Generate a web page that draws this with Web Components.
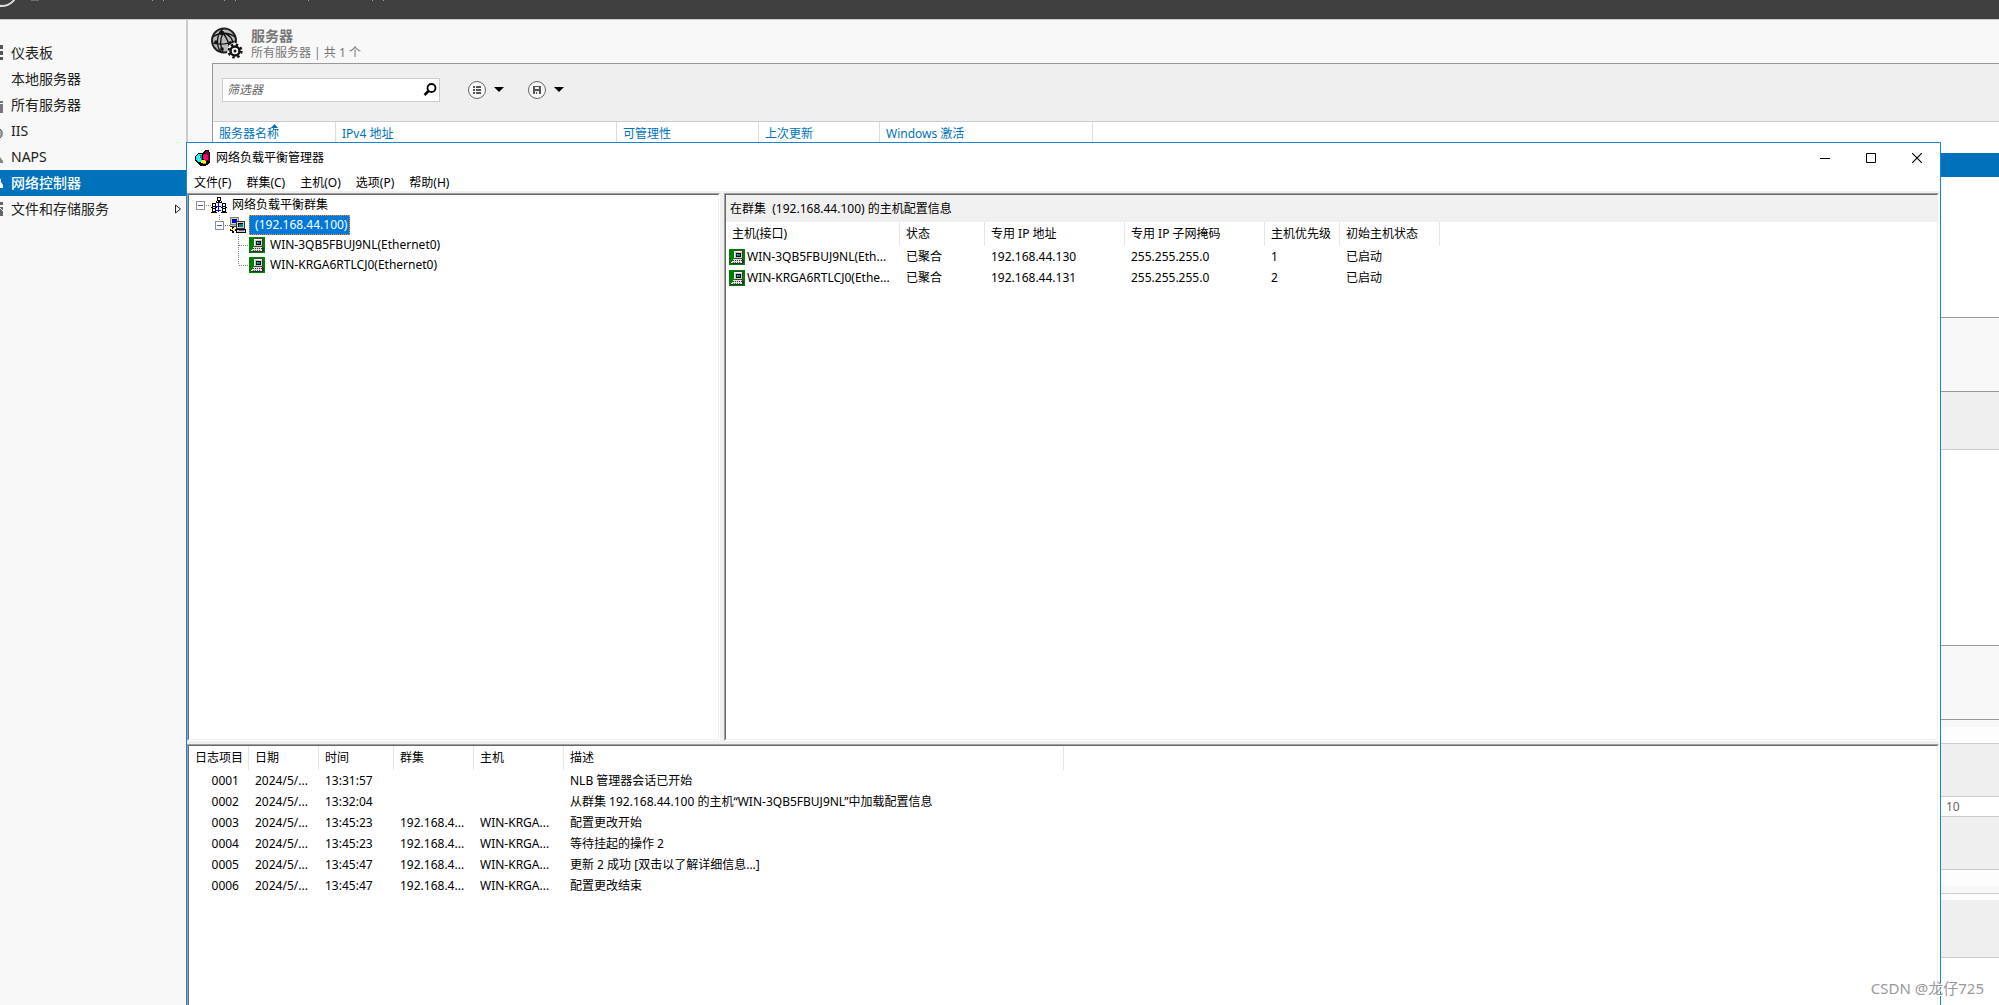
<!DOCTYPE html>
<html lang="zh-CN">
<head>
<meta charset="utf-8">
<title>网络负载平衡管理器</title>
<style>
html,body{margin:0;height:100%}
body{font:12px/16px "Noto Sans","Noto Sans CJK SC",sans-serif;color:#000;background:#f8f8f8;overflow:hidden}
</style>
</head>
<body>
<app-desktop></app-desktop>
<script>
const RESET = `*{box-sizing:border-box}button,input{font:inherit;color:inherit;margin:0;padding:0;border:0;background:none}svg{display:block;flex:none}a{color:inherit;text-decoration:none}`;
function define(name, css, html, setup) {
  customElements.define(name, class extends HTMLElement {
    connectedCallback() {
      if (this.shadowRoot) return;
      const root = this.attachShadow({ mode: 'open' });
      root.innerHTML = `<style>${RESET}${css}</style>${typeof html === 'function' ? html(this) : html}`;
      if (setup) setup(root, this);
    }
  });
}

const ICONS = {
  app: `<svg width="16" height="16" viewBox="0 0 16 16" shape-rendering="crispEdges"><path d="M3 3h5l1-2 2-1h3l1 3v9l-3 3-3 1H6l-3-2-2-2-1-3V7z" fill="#000"/><path d="M3 4h3l1 1v5l-2 2H3L1 10V7z" fill="#0ff"/><path d="M2 7h1v1H2zM4 6h1v1H4zM3 9h1v1H3z" fill="#fff"/><path d="M5 5h2v5H6z" fill="#088"/><path d="M9 3l2-2h2l1 2-2 1z" fill="#900048"/><path d="M8 5l2-1h2l1 2v3l-2 2-3-2z" fill="#f06"/><path d="M13 3h1v8h-1z" fill="#800040"/><path d="M5 12l3-2 3 1v2H7z" fill="#ff0"/><path d="M7 13h4l-1 1H8z" fill="#aa0"/></svg>`,
  world: `<svg width="16" height="16" viewBox="0 0 16 16" shape-rendering="crispEdges"><path d="M7 5h1v10H7zM5 9h5v1H5zM5 13h5v1H5z" fill="#00f"/><path d="M6 0h4v4H6zM5 4h6v2H5zM1 6h4v4H1zM0 10h6v1H0zM11 6h4v4h-4zM10 10h6v1h-6zM1 11h4v4H1zM0 15h6v1H0zM11 11h4v4h-4zM10 15h6v1h-6z" fill="#000"/><path d="M7 1h2v2H7zM6 4h1v1H6zM9 4h1v1H9zM2 7h2v2H2zM12 7h2v2h-2zM2 12h2v2H2zM12 12h2v2h-2zM2 10h2v1H2zM12 10h2v1h-2z" fill="#fff"/></svg>`,
  cluster: `<svg width="16" height="16" viewBox="0 0 16 16" shape-rendering="crispEdges"><path d="M0 0h9v8H0z" fill="#808080"/><path d="M1 1h7v6H1z" fill="#d0d0d0"/><path d="M2 2h5v4H2z" fill="#00f"/><path d="M2 2h5v1H2zM2 2h1v4H2z" fill="#000060"/><path d="M0 8h8v2H0z" fill="#c0c0c0"/><path d="M0 9h6v1H0z" fill="#444"/><path d="M6 4h9v8H6z" fill="#333"/><path d="M7 5h7v6H7z" fill="#d0d0d0"/><path d="M8 6h5v4H8z" fill="#000"/><path d="M9 7h4v3H9z" fill="#088"/><path d="M6 12h10v4H6z" fill="#000"/><path d="M7 13h8v2H7z" fill="#d0d0d0"/><path d="M9 13h5v1H9z" fill="#666"/><path d="M2 10h2v6H2zM0 12h6v2H0z" fill="#000"/><path d="M3 11h2v3H3zM1 12h3v1H1z" fill="#ff0"/></svg>`,
  host: `<svg width="16" height="16" viewBox="0 0 16 16" shape-rendering="crispEdges"><path d="M0 0h16v16H0z" fill="#008000"/><path d="M5 2h1V1h8v8h-1v1H5z" fill="#404040"/><path d="M5 2h8v7H5z" fill="#c8c8c8"/><path d="M5 2h8v1H5zM5 3h1v6H5z" fill="#fff"/><path d="M7 4h5v4H7z" fill="#000"/><path d="M8 5h3v2H8z" fill="#008c8c"/><path d="M8 5h1v1H8z" fill="#0ff"/><path d="M4 10h10v1h1v3h-1v1H2v-1h1v-2h1z" fill="#303030"/><path d="M4 10h9v1H4zM3 12h10v1H3zM2 13h11v1H2z" fill="#e0e0e0"/><path d="M5 11h1v1H5zM7 11h1v1H7zM9 11h1v1H9zM11 11h1v1h-1z" fill="#e0e0e0"/><path d="M4 13h1v1H4zM6 13h1v1H6zM8 13h1v1H8zM10 13h1v1h-1z" fill="#555"/></svg>`,
  servers: `<svg width="32" height="32" viewBox="0 0 32 32"><circle cx="13" cy="13.500" r="12" fill="#b9b9b9" stroke="#222" stroke-width="2"/><g fill="none" stroke="#111" stroke-width="1.300"><path d="M12 2C5 7 5 20 10 25M12 6C20 8 23 14 22 20M2 10C8 5 18 5 24 10M2 16C8 18 14 18 24 14M12 6C9 12 9 19 12 25M12 6C15 10 18 15 18 20"/></g><g fill="#111"><circle cx="11" cy="6" r="2.300"/><circle cx="5" cy="15" r="1.800"/><circle cx="19" cy="16" r="1.800"/><circle cx="11" cy="22" r="1.800"/></g><circle cx="24" cy="24" r="8" fill="#f8f8f8"/><circle cx="24" cy="24" r="4.500" fill="#f8f8f8" stroke="#111" stroke-width="2.500"/><circle cx="24" cy="24" r="6.500" fill="none" stroke="#111" stroke-width="2.200" stroke-dasharray="2.500 2.600"/><circle cx="24" cy="24" r="1.500" fill="#111"/></svg>`
};

define('top-bar', `:host{display:block;height:20px;background:#404040;border-bottom:1px solid #ccc;flex:none}`,
  `<svg width="400" height="8" viewBox="0 0 400 8"><circle cx="2" cy="-9" r="15" fill="none" stroke="#ddd" stroke-width="2"/><path d="M31 0h8M152 .5h1M163 .5h1M224 .5h1M235 .5h1M308 .5h1M372 .5h1M383 .5h1" stroke="#999"/></svg>`);

define('nav-item', `:host{display:block}
a{display:flex;align-items:center;height:26px;font-size:14px;line-height:20px;color:#222}
:host([current]) a{background:#0072bc;color:#fff;font-weight:500}
.label{flex:1;margin-left:7px}.more{margin-right:4px}`,
  el => {
    const glyphs = {
      dash: '<path d="M0 0h3v4H0zM0 6h3v4H0zM0 12h3v3H0z" fill="#555"/>',
      all: '<path d="M0 4h3v2H0zM0 7h3v9H0z" fill="#777"/>',
      iis: '<path d="M0 6a4 5 0 0 1 0 9" fill="#aaa" stroke="#555"/>',
      naps: '<path d="M0 8l3 4v2H0z" fill="#888"/>',
      net: '<path d="M0 4h1v3l2 3v3H0z" fill="#fff"/>',
      file: '<path d="M0 1h3v3H0zM0 6h3v9H0z" fill="#666"/><path d="M0 7l3 3" stroke="#fff"/>'
    };
    return `<a href="#"><svg width="4" height="16" viewBox="0 0 4 16">${glyphs[el.getAttribute('icon')] || ''}</svg><span class="label"><slot></slot></span>${el.hasAttribute('more') ? '<svg class="more" width="8" height="10" viewBox="0 0 8 10"><path d="M1.500 1v8l5-4z" fill="none" stroke="#222"/></svg>' : ''}</a>`;
  });

define('side-nav', `:host{display:block;width:188px;flex:none;border-right:2px solid #ccc;padding-top:20px;background:#f8f8f8}`,
  `<nav><nav-item icon="dash">仪表板</nav-item><nav-item>本地服务器</nav-item><nav-item icon="all">所有服务器</nav-item><nav-item icon="iis">IIS</nav-item><nav-item icon="naps">NAPS</nav-item><nav-item icon="net" current>网络控制器</nav-item><nav-item icon="file" more>文件和存储服务</nav-item></nav>`);

define('round-menu', `:host{display:block}button{display:flex;align-items:center;gap:7px}`,
  el => `<button aria-label="${el.getAttribute('label')}"><svg width="20" height="20" viewBox="0 0 20 20"><circle cx="10" cy="10" r="8.500" fill="#f8f8f8" stroke="#666"/>${el.getAttribute('kind') === 'list'
    ? '<path d="M6 6h2v2H6zM9 6h5v2H9zM6 9h2v2H6zM9 9h5v2H9zM6 12h2v2H6zM9 12h5v2H9z" fill="#555"/>'
    : '<path d="M6 6h8v8H6z" fill="#555"/><path d="M8 7h4v2H8zM8 11h4v3H8z" fill="#eee"/><path d="M9 12h1v2H9z" fill="#555"/>'}</svg><svg width="10" height="6" viewBox="0 0 10 6"><path d="M0 0h10L5 5z" fill="#000"/></svg></button>`);

define('server-pane', `:host{display:flex;flex-direction:column;flex:1;min-width:0;padding-left:23px;background:#f8f8f8}
header{display:flex;height:43px;padding-top:7px;gap:8px;flex:none;color:#777}
h1{margin:0;font-size:14px;line-height:18px;font-weight:700}p{margin:0;line-height:16px}
.panel{flex:1;display:flex;flex-direction:column;margin-left:1px;border:1px solid #999;border-width:1px 0 0 1px;background:#fff}
.tools{display:flex;align-items:center;height:58px;padding:0 9px 6px;background:#efefef;border-bottom:1px solid #ccc;flex:none}
.filter{display:flex;align-items:center;width:218px;height:24px;border:1px solid #ccc;background:#fff;padding:0 2px 0 4px;margin-right:27px}
input{flex:1;min-width:0;font-style:italic;outline:0}input::placeholder{color:#666;opacity:1}
round-menu+round-menu{margin-left:23px}
table{border-collapse:separate;border-spacing:0;table-layout:fixed;width:880px;color:#0072bc;flex:none}
th{height:22px;padding:2px 0 0 6px;text-align:left;font-weight:400;border-right:1px solid #ddd;position:relative}
th svg{position:absolute;left:58px;top:2px}
.strip{flex:none;border-bottom:1px solid #ccc;padding-left:1733px;color:#666;line-height:19px}
.f8{background:#f8f8f8}.ef{background:#efefef}.fd{background:#fdfdfd}.dark{border-color:#999}.plain{border:0}`,
  () => {
    const strips = [[9, 'plain'], [24, 'plain', 'background:#0072bc'], [141, 'dark'], [74, 'f8 dark'], [58, 'ef'], [196, 'dark'], [74, 'f8 dark'], [7, 'f8 plain'], [17, 'fd'], [53, 'ef'], [20, '', '', '10'], [53, 'ef'], [16, 'fd plain'], [8, 'f8'], [6, 'fd plain'], [58, 'ef']];
    return `<header>${ICONS.servers}<div><h1>服务器</h1><p>所有服务器 | 共 1 个</p></div></header><div class="panel"><div class="tools"><label class="filter"><input placeholder="筛选器" aria-label="筛选器"><svg width="14" height="14" viewBox="0 0 14 14"><circle cx="8.500" cy="5" r="4" fill="none" stroke="#000" stroke-width="1.800"/><path d="M5.500 8L1.500 12" stroke="#000" stroke-width="2.500"/></svg></label><round-menu kind="list" label="视图"></round-menu><round-menu kind="save" label="保存"></round-menu></div>
<table><colgroup><col style="width:123px"><col style="width:281px"><col style="width:142px"><col style="width:121px"><col style="width:213px"></colgroup><tr><th>服务器名称<svg width="7" height="4" viewBox="0 0 7 4"><path d="M0 4h7L3.500 0z" fill="#0072bc"/></svg></th><th>IPv4 地址</th><th>可管理性</th><th>上次更新</th><th>Windows 激活</th></tr></table>
${strips.map(([h, c, s, t]) => `<div class="strip ${c}" style="height:${h}px;${s || ''}">${t || ''}</div>`).join('')}</div>`;
  });

define('title-bar', `:host{display:flex;align-items:center;height:29px;padding-left:8px;flex:none}
.t{flex:1;margin-left:5px}button{display:grid;place-items:center;width:46px;height:28px}`,
  `${ICONS.app}<span class="t"><slot></slot></span>
<button aria-label="最小化"><svg width="10" height="10" viewBox="0 0 10 10"><path d="M0 5.500h10" stroke="#000"/></svg></button><button aria-label="最大化"><svg width="10" height="10" viewBox="0 0 10 10"><path d="M.5.500h9v9h-9z" fill="none" stroke="#000"/></svg></button><button aria-label="关闭"><svg width="10" height="10" viewBox="0 0 10 10"><path d="M0 0l10 10M10 0L0 10" stroke="#000" stroke-width="1.200"/></svg></button>`);

define('menu-bar', `:host{display:flex;gap:15px;height:21px;padding:3px 7px 0;border-bottom:2px solid #f0f0f0;flex:none}button{line-height:16px;white-space:nowrap}`,
  `<button>文件(F)</button><button>群集(C)</button><button>主机(O)</button><button>选项(P)</button><button>帮助(H)</button>`);

define('sunken-pane', `:host{display:flex;min-width:0;min-height:0;border:1px solid #fff;border-top-color:#a0a0a0;border-left-color:#a0a0a0}
.in{flex:1;min-width:0;border:1px solid #f0f0f0;border-top-color:#696969;border-left-color:#696969;background:#fff;overflow:hidden}`,
  `<div class="in"><slot></slot></div>`);

define('tree-item', `:host{display:flex;align-items:center;height:20px}
.label{margin-left:3px;padding:0 2px;height:20px;line-height:20px;white-space:pre}
:host([selected]) .label{padding:0 3px;background:#0078d7;color:#fff;outline:1px dotted #ff8728;outline-offset:-1px}`,
  el => {
    const dot = 'stroke="#808080" stroke-dasharray="1 1" fill="none"';
    const box = x => `<rect x="${x}.5" y="6.500" width="8" height="8" fill="#fff" stroke="#919191"/><path d="M${x + 2} 10.500h5" stroke="#4b63a7"/>`;
    const guides = {
      root: [22, `<path d="M17 10.500h5" ${dot}/>${box(7)}`],
      cluster: [41, `<path d="M30.500 0v6M36 10.500h5" ${dot}/>${box(26)}`],
      host: [60, `<path d="M49.500 0v20M50 10.500h10" ${dot}/>`],
      last: [60, `<path d="M49.500 0v10M50 10.500h10" ${dot}/>`]
    };
    const [w, art] = guides[el.getAttribute('guide')];
    return `<svg width="${w}" height="20" viewBox="0 0 ${w} 20" shape-rendering="crispEdges">${art}</svg>${ICONS[el.getAttribute('icon')]}<span class="label"><slot></slot></span>`;
  });

const GRIDS = {
  hosts: {
    cols: [['主机(接口)', 174], ['状态', 85], ['专用 IP 地址', 140], ['专用 IP 子网掩码', 140], ['主机优先级', 75], ['初始主机状态', 100]],
    rows: [['WIN-3QB5FBUJ9NL(Eth...', '已聚合', '192.168.44.130', '255.255.255.0', '1', '已启动'], ['WIN-KRGA6RTLCJ0(Ethe...', '已聚合', '192.168.44.131', '255.255.255.0', '2', '已启动']]
  },
  log: {
    cols: [['日志项目', 60], ['日期', 70], ['时间', 75], ['群集', 80], ['主机', 90], ['描述', 500]],
    rows: [['0001', '2024/5/...', '13:31:57', '', '', 'NLB 管理器会话已开始'],
      ['0002', '2024/5/...', '13:32:04', '', '', '从群集 192.168.44.100 的主机“WIN-3QB5FBUJ9NL”中加载配置信息'],
      ['0003', '2024/5/...', '13:45:23', '192.168.4...', 'WIN-KRGA...', '配置更改开始'],
      ['0004', '2024/5/...', '13:45:23', '192.168.4...', 'WIN-KRGA...', '等待挂起的操作 2'],
      ['0005', '2024/5/...', '13:45:47', '192.168.4...', 'WIN-KRGA...', '更新 2 成功 [双击以了解详细信息...]'],
      ['0006', '2024/5/...', '13:45:47', '192.168.4...', 'WIN-KRGA...', '配置更改结束']]
  }
};
define('data-grid', `:host{display:block}
table{border-collapse:separate;border-spacing:0;table-layout:fixed;width:1px}
th,td{padding:0 0 0 6px;text-align:left;font-weight:400;white-space:nowrap}
th{height:24px;border-right:1px solid #e5e5e5}td{height:21px}
.num{text-align:right;padding:0 10px 0 0}.host{padding-left:3px}.host div{display:flex;align-items:center;gap:2px}`,
  el => {
    const kind = el.getAttribute('kind'), g = GRIDS[kind];
    const cell = (t, i) => i ? `<td>${t}</td>` : kind === 'log' ? `<td class="num">${t}</td>` : `<td class="host"><div>${ICONS.host}<span>${t}</span></div></td>`;
    return `<table><colgroup>${g.cols.map(c => `<col style="width:${c[1]}px">`).join('')}</colgroup><thead><tr>${g.cols.map(c => `<th>${c[0]}</th>`).join('')}</tr></thead><tbody>${g.rows.map(r => `<tr>${r.map(cell).join('')}</tr>`).join('')}</tbody></table>`;
  });

define('nlb-manager', `:host{display:flex;flex-direction:column;border:1px solid #1883d7;border-bottom:0;background:#fff;overflow:hidden}
.body{flex:1;display:flex;flex-direction:column;gap:3px;background:#f0f0f0;margin-right:1px;min-height:0}
.top{flex:548;display:flex;gap:4px;min-height:0}.tree{flex:531}.hosts{flex:1213}.log{flex:261;margin-bottom:-2px}
.cap{height:27px;line-height:28px;padding-left:4px;background:#f0f0f0}`,
  `<title-bar>网络负载平衡管理器</title-bar><menu-bar></menu-bar>
<div class="body"><div class="top"><sunken-pane class="tree"><tree-item guide="root" icon="world">网络负载平衡群集</tree-item><tree-item guide="cluster" icon="cluster" selected>&nbsp;(192.168.44.100)</tree-item><tree-item guide="host" icon="host">WIN-3QB5FBUJ9NL(Ethernet0)</tree-item><tree-item guide="last" icon="host">WIN-KRGA6RTLCJ0(Ethernet0)</tree-item></sunken-pane>
<sunken-pane class="hosts"><div class="cap">在群集 &nbsp;(192.168.44.100) 的主机配置信息</div><data-grid kind="hosts"></data-grid></sunken-pane></div>
<sunken-pane class="log"><data-grid kind="log"></data-grid></sunken-pane></div>`);

define('app-desktop', `:host{display:flex;flex-direction:column;height:100vh;position:relative;overflow:hidden}
.main{flex:1;display:flex;min-height:0}
nlb-manager{position:absolute;left:186px;right:58px;top:142px;bottom:0}
.mark{position:absolute;right:15px;bottom:7px;font-size:15px;line-height:20px;color:#999;text-shadow:1px 1px 0 #fff}`,
  `<top-bar></top-bar><div class="main"><side-nav></side-nav><server-pane></server-pane></div><nlb-manager></nlb-manager><span class="mark">CSDN @龙仔725</span>`);
</script>
</body>
</html>
